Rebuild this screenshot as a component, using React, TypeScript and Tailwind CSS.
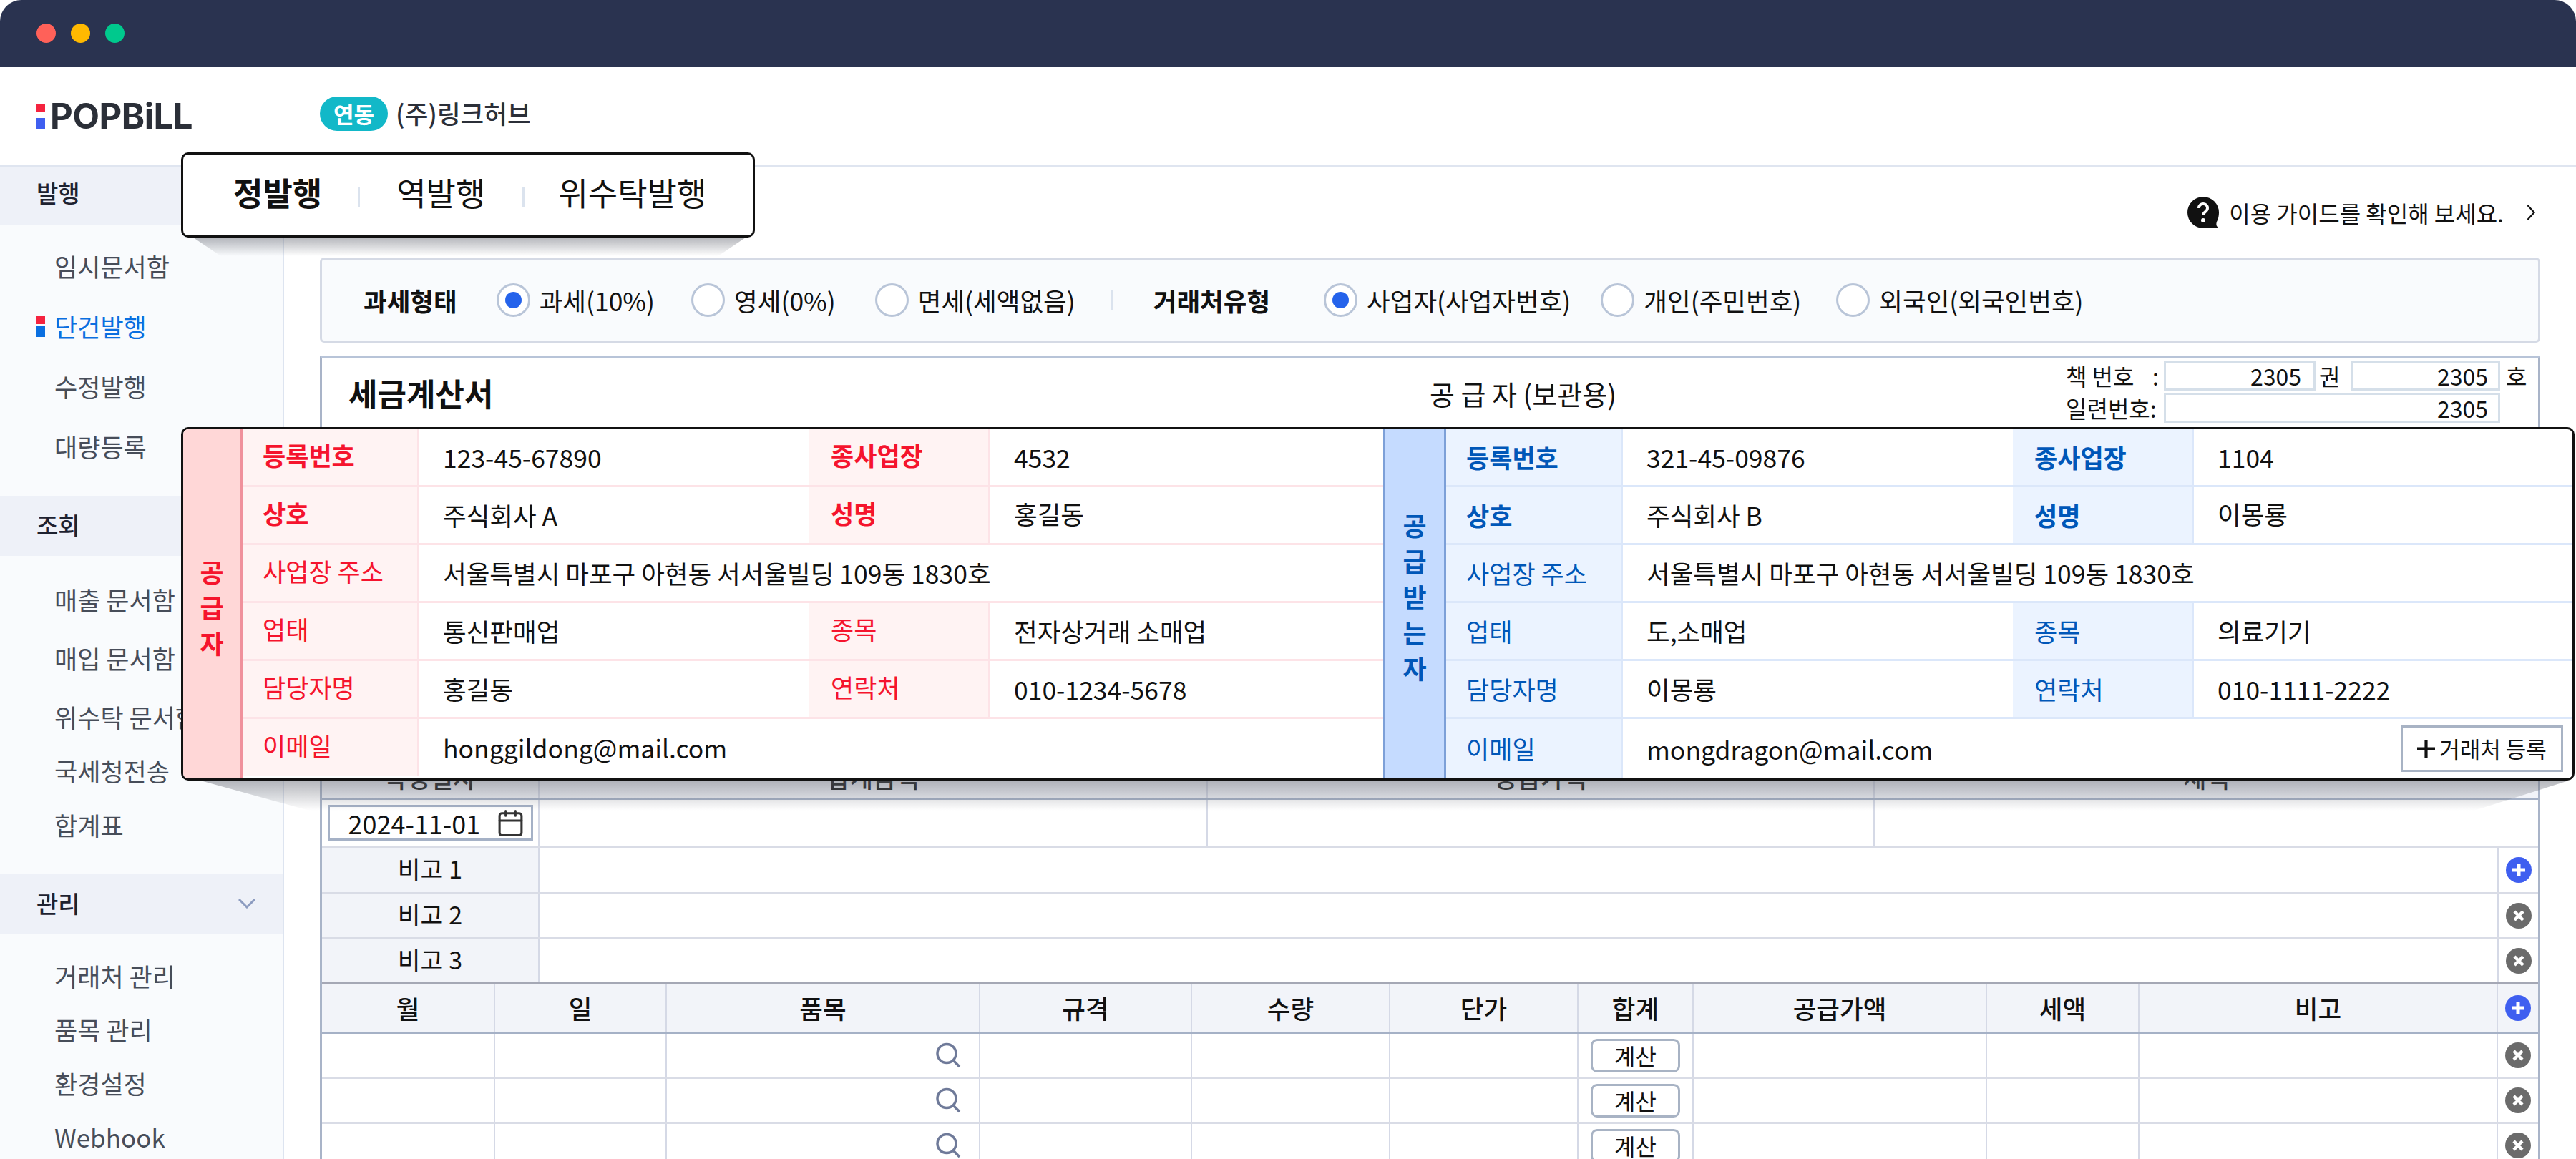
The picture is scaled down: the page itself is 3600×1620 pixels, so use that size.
import { FC, ReactNode } from "react";
import { Calendar } from "lucide-react";

const LogoMark: FC<{ blue?: string; h?: string }> = ({ blue = "bg-[#3f5ff0]", h = "h-[35px]" }) => (
  <span className={`flex flex-col justify-between w-[12px] ${h}`}>
    <span className="h-[12px] bg-[#f5233f]" />
    <span className={`h-[15px] ${blue}`} />
  </span>
);

const Radio: FC<{ on?: boolean; label: string; className: string }> = ({ on, label, className }) => (
  <div className={`flex items-center ${className}`}>
    <span className="flex items-center justify-center w-[47px] h-[47px] rounded-full border-[3px] border-[#b9c5d8] bg-white">
      {on && <span className="w-[23px] h-[23px] rounded-full bg-[#2563eb]" />}
    </span>
    <span className="ml-[13px]">{label}</span>
  </div>
);

const RoundIcon: FC<{ type: "plus" | "x" }> = ({ type }) => (
  <svg viewBox="0 0 36 36" className="w-[36px] h-[36px]">
    <circle cx="18" cy="18" r="18" fill={type === "plus" ? "#3f5ff0" : "#6b6b6b"} />
    {type === "plus" ? (
      <path d="M18 9v18M9 18h18" stroke="white" strokeWidth="5" />
    ) : (
      <path d="M12 12l12 12M24 12L12 24" stroke="white" strokeWidth="4.5" />
    )}
  </svg>
);

const SearchIcon: FC = () => (
  <svg viewBox="0 0 36 36" className="w-[36px] h-[36px]" fill="none" stroke="#6f7a99" strokeWidth="3.5">
    <circle cx="16" cy="15.5" r="13" />
    <path d="M25 25l9 9" />
  </svg>
);

type Party = {
  side: string[];
  sideClass: string;
  labelClass: string;
  lineClass: string;
  vals: ReactNode[];
  lastRow: string;
  extra?: ReactNode;
};

const PartyTable: FC<Party> = ({ side, sideClass, labelClass, lineClass, vals, lastRow, extra }) => {
  const label = (text: string, bold: boolean, pad: string) => (
    <div className={`flex items-center h-full ${pad} border-r-[3px] ${lineClass} ${labelClass} ${bold ? "font-bold" : ""}`}>
      {text}
    </div>
  );
  const row = (a: string, b: ReactNode, c: string, d: ReactNode, bold = false) => (
    <div className={`flex h-[81px] border-b-[3px] ${lineClass}`}>
      <div className="w-[247px] shrink-0">{label(a, bold, "pl-[28px]")}</div>
      <div className="w-[545px] shrink-0 flex items-center pl-[33px] text-[35.5px]">{b}</div>
      <div className="w-[253px] shrink-0">{label(c, bold, "pl-[30px]")}</div>
      <div className="flex-1 flex items-center pl-[33px] text-[35.5px]">{d}</div>
    </div>
  );
  return (
    <div className="flex flex-1 min-w-0">
      <div className={`shrink-0 flex flex-col items-center justify-center font-bold text-[36px] ${sideClass}`}>
        {side.map((c) => (
          <span key={c} className="h-[50px] leading-[50px]">
            {c}
          </span>
        ))}
      </div>
      <div className="flex-1 flex flex-col min-w-0">
        {row("등록번호", vals[0], "종사업장", vals[1], true)}
        {row("상호", vals[2], "성명", vals[3], true)}
        <div className={`flex h-[81px] border-b-[3px] ${lineClass}`}>
          <div className="w-[247px] shrink-0">{label("사업장 주소", false, "pl-[28px]")}</div>
          <div className="flex-1 flex items-center pl-[33px] text-[35.5px]">{vals[4]}</div>
        </div>
        {row("업태", vals[5], "종목", vals[6])}
        {row("담당자명", vals[7], "연락처", vals[8])}
        <div className={`flex ${lastRow}`}>
          <div className="w-[247px] shrink-0">{label("이메일", false, "pl-[28px]")}</div>
          <div className="flex-1 flex items-center justify-between pl-[33px] pr-[13px] text-[35.5px]">
            {vals[9]}
            {extra}
          </div>
        </div>
      </div>
    </div>
  );
};

const navA = [
  { name: "임시문서함", h: "h-[84px]" },
  { name: "단건발행", h: "h-[84px]", active: true },
  { name: "수정발행", h: "h-[84px]" },
  { name: "대량등록", h: "h-[84px]" },
];
const navB = [
  { name: "매출 문서함", h: "h-[82px]" },
  { name: "매입 문서함", h: "h-[82px]" },
  { name: "위수탁 문서함", h: "h-[82px]" },
  { name: "국세청전송", h: "h-[68px]" },
  { name: "합계표", h: "h-[84px]" },
];
const navC = ["거래처 관리", "품목 관리", "환경설정", "Webhook"];

const itemCols = ["월", "일", "품목", "규격", "수량", "단가", "합계", "공급가액", "세액", "비고"];

const App: FC = () => {
  return (
    <div className="relative w-[3600px] h-[1620px] overflow-hidden bg-white text-[#111] font-['Noto_Sans_CJK_KR','Noto_Sans',sans-serif]">
      {/* window title bar */}
      <div className="flex items-center gap-[21px] h-[93px] pl-[51px] rounded-t-[30px] bg-[#2a3350]">
        <span className="w-[27px] h-[27px] rounded-full bg-[#ff6159]" />
        <span className="w-[27px] h-[27px] rounded-full bg-[#ffb900]" />
        <span className="w-[27px] h-[27px] rounded-full bg-[#00c98d]" />
      </div>

      {/* top bar */}
      <div className="flex items-center h-[141px] pl-[51px] border-b-[3px] border-[#dfe5f0]">
        <LogoMark />
        <span className="ml-[7px] w-[377px] font-['Inter',sans-serif] font-bold text-[49px] leading-none tracking-[-0.5px] text-[#2b2f38]">
          POPBiLL
        </span>
        <span className="-mt-[6px] flex items-center justify-center w-[95px] h-[48px] rounded-full bg-[#12b8c8] text-white font-bold text-[31px]">
          연동
        </span>
        <span className="-mt-[8px] ml-[11px] text-[35.5px] text-[#2b2f38] font-medium">(주)링크허브</span>
      </div>

      <div className="flex h-[1386px]">
        {/* sidebar */}
        <aside className="w-[397px] shrink-0 bg-[#f9fbfd] border-r-[2px] border-[#dde4f0] text-[35px] text-[#474d59]">
          <div className="flex items-center h-[81px] pb-[10px] pl-[51px] bg-[#eef1f8] text-[33px] font-medium text-[#1d2230]">발행</div>
          <div className="mt-[15px] mb-[27px]">
            {navA.map((n) => (
              <div key={n.name} className={`flex items-center ${n.h} pl-[76px] relative ${n.active ? "text-[#0a6fe0]" : ""}`}>
                {n.active && (
                  <span className="absolute left-[51px]">
                    <LogoMark blue="bg-[#0a6fe0]" h="h-[30px]" />
                  </span>
                )}
                {n.name}
              </div>
            ))}
          </div>
          <div className="flex items-center h-[84px] pb-[3px] pl-[51px] bg-[#eef1f8] text-[33px] font-medium text-[#1d2230]">조회</div>
          <div className="mt-[20px] mb-[26px]">
            {navB.map((n) => (
              <div key={n.name} className={`flex items-center ${n.h} pl-[76px] whitespace-nowrap`}>
                {n.name}
              </div>
            ))}
          </div>
          <div className="flex items-center justify-between h-[84px] pl-[51px] pr-[38px] bg-[#eef1f8] text-[33px] font-medium text-[#1d2230]">
            관리
            <svg viewBox="0 0 24 14" className="w-[24px] h-[14px]" fill="none" stroke="#8c9cc0" strokeWidth="3">
              <path d="M1 1l11 11L23 1" />
            </svg>
          </div>
          <div className="mt-[22px]">
            {navC.map((n) => (
              <div key={n} className="flex items-center h-[75px] pl-[76px]">
                {n}
              </div>
            ))}
          </div>
        </aside>

        {/* main */}
        <main className="flex-1 min-w-0 pl-[50px] pr-[50px]">
          <div className="flex items-center justify-end h-[126px] pr-[6px] text-[32px]">
            <svg viewBox="0 0 44 44" className="w-[44px] h-[44px]">
              <path d="M22 0a22 22 0 1 0 0 44c6 0 11-1 21-1-3-2-3-5-2-8 2-4 3-8 3-13A22 22 0 0 0 22 0z" fill="#111" />
              <path d="M16 16c0-8 12-8 12 0 0 5-6 5-6 10" fill="none" stroke="white" strokeWidth="4" />
              <circle cx="22" cy="33" r="3" fill="white" />
            </svg>
            <span className="ml-[14px]">이용 가이드를 확인해 보세요.</span>
            <svg viewBox="0 0 14 24" className="ml-[31px] w-[14px] h-[22px]" fill="none" stroke="#111" strokeWidth="2.5">
              <path d="M2 1l10 11L2 23" />
            </svg>
          </div>

          {/* options */}
          <div className="flex items-center h-[119px] pl-[58px] rounded-[6px] border-[3px] border-[#d5dae5] bg-[#f9fbfd] text-[35.5px]">
            <span className="font-bold">과세형태</span>
            <Radio on label="과세(10%)" className="ml-[55px]" />
            <Radio label="영세(0%)" className="ml-[51px]" />
            <Radio label="면세(세액없음)" className="ml-[55px]" />
            <span className="ml-[49px] w-[3px] h-[29px] bg-[#dbe3ee]" />
            <span className="ml-[57px] font-bold">거래처유형</span>
            <Radio on label="사업자(사업자번호)" className="ml-[75px]" />
            <Radio label="개인(주민번호)" className="ml-[42px]" />
            <Radio label="외국인(외국인번호)" className="ml-[49px]" />
          </div>

          {/* invoice */}
          <div className="mt-[19px] h-[1125px] border-x-[3px] border-t-[3px] border-x-[#a9b4c8] border-t-[#b8c4d8]">
            <div className="flex items-center h-[96px] text-[32px]">
              <span className="pl-[37px] w-[1548px] font-bold text-[44px] whitespace-nowrap">세금계산서</span>
              <span className="w-[889px] text-[38px] whitespace-nowrap">공 급 자 (보관용)</span>
              <div className="flex flex-col gap-[3px] mt-[-4px]">
                <div className="flex items-center h-[42px]">
                  <span className="w-[121px] whitespace-nowrap">책 번호</span>
                  <span className="w-[16px]">:</span>
                  <span className="flex items-center justify-end w-[212px] h-full pr-[17px] border-[3px] border-[#d5dfe9]">2305</span>
                  <span className="ml-[5px] w-[45px]">권</span>
                  <span className="flex items-center justify-end w-[208px] h-full pr-[14px] border-[3px] border-[#d5dfe9]">2305</span>
                  <span className="ml-[8px]">호</span>
                </div>
                <div className="flex items-center h-[42px]">
                  <span className="w-[137px] whitespace-nowrap">일련번호:</span>
                  <span className="flex items-center justify-end w-[470px] h-full pr-[14px] border-[3px] border-[#d5dfe9]">2305</span>
                </div>
              </div>
            </div>

            <div className="h-[463px]" />

            <div className="grid grid-cols-[304px_934px_932px_1fr] h-[58px] bg-[#f2f4f9] border-b-[3px] border-[#a5b1c6] text-[35px] text-center font-medium">
              <div className="border-r-[2px] border-[#d5d9e6]">작성일자</div>
              <div className="border-r-[2px] border-[#d5d9e6]">합계금액</div>
              <div className="border-r-[2px] border-[#d5d9e6]">공급가액</div>
              <div>세액</div>
            </div>

            <div className="grid grid-cols-[304px_934px_932px_1fr] h-[67px] border-b-[3px] border-[#d9dce6]">
              <div className="flex items-center justify-center border-r-[2px] border-[#d5d9e6]">
                <div className="flex items-center w-[287px] h-[50px] pl-[26px] border-[3px] border-[#a5b1c6] text-[36px]">
                  2024-11-01
                  <Calendar className="ml-[22px] w-[41px] h-[41px] shrink-0 text-[#333]" strokeWidth={1.8} />
                </div>
              </div>
              <div className="border-r-[2px] border-[#d5d9e6]" />
              <div className="border-r-[2px] border-[#d5d9e6]" />
              <div />
            </div>

            {["비고 1", "비고 2", "비고 3"].map((b, i) => (
              <div
                key={b}
                className={`flex ${i === 0 ? "h-[65px]" : "h-[63px]"} border-b-[3px] ${i === 2 ? "border-[#a5a8b5]" : "border-[#d9dce6]"} text-[34.5px]`}
              >
                <div className="flex items-center justify-center w-[304px] pb-[4px] bg-[#f2f4f9] border-r-[2px] border-[#d5d9e6]">{b}</div>
                <div className="flex-1" />
                <div className="flex items-center justify-center w-[57px] border-l-[2px] border-[#d5d9e6]">
                  <RoundIcon type={i === 0 ? "plus" : "x"} />
                </div>
              </div>
            ))}

            <div className="grid grid-cols-[242px_240px_438px_296px_277px_263px_161px_410px_213px_501px_1fr] h-[69px] bg-[#f2f4f9] border-b-[3px] border-[#a5b1c6] text-[35.5px] font-medium">
              {itemCols.map((c) => (
                <div key={c} className="flex items-center justify-center border-r-[2px] border-[#d5d9e6]">
                  {c}
                </div>
              ))}
              <div className="flex items-center justify-center">
                <RoundIcon type="plus" />
              </div>
            </div>

            {[0, 1, 2].map((r) => (
              <div
                key={r}
                className="grid grid-cols-[242px_240px_438px_296px_277px_263px_161px_410px_213px_501px_1fr] h-[63px] border-b-[3px] border-[#d9dce6]"
              >
                <div className="border-r-[2px] border-[#d5d9e6]" />
                <div className="border-r-[2px] border-[#d5d9e6]" />
                <div className="flex items-center justify-end pr-[25px] border-r-[2px] border-[#d5d9e6]">
                  <SearchIcon />
                </div>
                <div className="border-r-[2px] border-[#d5d9e6]" />
                <div className="border-r-[2px] border-[#d5d9e6]" />
                <div className="border-r-[2px] border-[#d5d9e6]" />
                <div className="flex items-center justify-center border-r-[2px] border-[#d5d9e6]">
                  <span className="flex items-center justify-center w-[125px] h-[47px] rounded-[9px] border-[3px] border-[#a8b3c4] text-[32px]">
                    계산
                  </span>
                </div>
                <div className="border-r-[2px] border-[#d5d9e6]" />
                <div className="border-r-[2px] border-[#d5d9e6]" />
                <div className="border-r-[2px] border-[#d5d9e6]" />
                <div className="flex items-center justify-center">
                  <RoundIcon type="x" />
                </div>
              </div>
            ))}
          </div>
        </main>
      </div>

      {/* issue type popover */}
      <div className="absolute left-[270px] top-[332px] w-[772px] h-[26px] bg-linear-to-b from-[#6b6e78]/50 to-transparent [clip-path:polygon(0_0,100%_0,95%_100%,5%_100%)]" />
      <div className="absolute left-[253px] top-[213px] flex items-center w-[802px] h-[119px] pb-[8px] pl-[70px] rounded-[10px] border-[3px] border-[#111] bg-white text-[45px]">
        <span className="font-bold">정발행</span>
        <span className="ml-[50px] w-[3px] h-[27px] mt-[14px] bg-[#dbe3ee]" />
        <span className="ml-[51px]">역발행</span>
        <span className="ml-[52px] w-[3px] h-[27px] mt-[14px] bg-[#dbe3ee]" />
        <span className="ml-[47px]">위수탁발행</span>
      </div>

      {/* supplier / buyer popover */}
      <div className="absolute left-[280px] top-[1091px] w-[3310px] h-[42px] bg-linear-to-b from-[#6b6e78]/50 to-transparent [clip-path:polygon(0_0,100%_0,96%_100%,4.6%_100%)]" />
      <div className="absolute left-[253px] top-[597px] flex w-[3345px] h-[494px] overflow-hidden rounded-[10px] border-[3px] border-[#111] bg-white text-[35px]">
        <div className="flex w-[1677px] shrink-0">
          <PartyTable
            side={["공", "급", "자"]}
            sideClass="w-[83px] pt-[8px] bg-[#ffd7d7] border-r-[3px] border-[#f0919c] text-[#f5142d]"
            labelClass="pb-[5px] bg-[#fff3f3] text-[#f5142d]"
            lineClass="border-[#fde3e7]"
            lastRow="h-[80px]"
            vals={[
              "123-45-67890",
              "4532",
              "주식회사 A",
              <span className="pb-[5px]">홍길동</span>,
              "서울특별시 마포구 아현동 서서울빌딩 109동 1830호",
              "통신판매업",
              "전자상거래 소매업",
              "홍길동",
              "010-1234-5678",
              "honggildong@mail.com",
            ]}
          />
        </div>
        <PartyTable
          side={["공", "급", "받", "는", "자"]}
          sideClass="w-[88px] pb-[22px] bg-[#c5dbff] border-x-[3px] border-[#7da0d8] text-[#0057b8]"
          labelClass="bg-[#ebf3ff] text-[#0057b8]"
          lineClass="border-[#dbe7fa]"
          lastRow="flex-1"
          vals={[
            "321-45-09876",
            "1104",
            "주식회사 B",
            <span className="pb-[5px]">이몽룡</span>,
            "서울특별시 마포구 아현동 서서울빌딩 109동 1830호",
            "도,소매업",
            "의료기기",
            "이몽룡",
            "010-1111-2222",
            "mongdragon@mail.com",
          ]}
          extra={
            <span className="flex items-center justify-center w-[227px] h-[65px] border-[3px] border-[#a8b3c4] text-[31px] whitespace-nowrap">
              <svg viewBox="0 0 24 24" className="w-[25px] h-[25px] mr-[6px]" stroke="#111" strokeWidth="4">
                <path d="M12 0v24M0 12h24" />
              </svg>
              거래처 등록
            </span>
          }
        />
      </div>
    </div>
  );
};

export default App;
